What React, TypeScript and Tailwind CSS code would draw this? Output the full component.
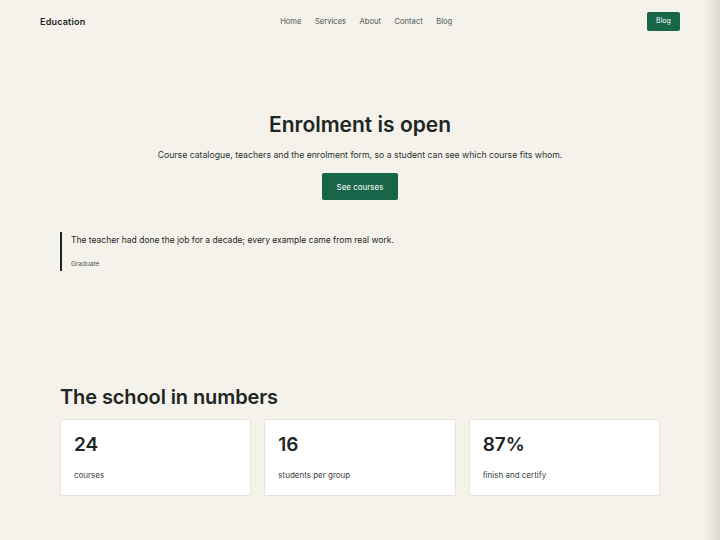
import React from "react";

const stats = [
  { n: "24", l: "courses" },
  { n: "16", l: "students per group" },
  { n: "87%", l: "finish and certify" },
];

export default function App() {
  return (
    <div className="relative min-h-[540px] w-full bg-[#f5f2eb] text-[#1d2622] font-['Inter',sans-serif]">
      <header className="flex h-[42px] items-center justify-between px-[40px] pt-[1px]">
        <div className="text-[9px] font-semibold tracking-[0.2px]">Education</div>
        <nav className="flex gap-[13.5px] text-[7.6px] text-[#4a524e]">
          <span>Home</span>
          <span>Services</span>
          <span>About</span>
          <span>Contact</span>
          <span>Blog</span>
        </nav>
        <span className="flex h-[19px] w-[33px] items-center justify-center rounded-[2px] bg-[#17664a] text-[7px] text-white">Blog</span>
      </header>

      <section className="flex flex-col items-center pt-[71px]">
        <h1 className="text-[21px] font-semibold leading-[24px]">Enrolment is open</h1>
        <p className="mt-[12px] text-[8.7px] text-[#2b332f]">
          Course catalogue, teachers and the enrolment form, so a student can see which course fits whom.
        </p>
        <span className="mt-[11px] flex h-[27px] w-[76px] items-center justify-center rounded-[2px] bg-[#17664a] text-[8px] text-white">See courses</span>
      </section>

      <div className="mx-auto mt-[32px] w-[600px]">
        <blockquote className="border-l-2 border-[#1d2622] pl-[9px] py-[2px]">
          <p className="text-[8.5px] leading-[12px]">The teacher had done the job for a decade; every example came from real work.</p>
          <p className="mt-[14px] text-[6.5px] leading-[9px] text-[#4a524e]">Graduate</p>
        </blockquote>
      </div>

      <section className="mx-auto mt-[114px] w-[600px]">
        <h2 className="text-[20px] font-semibold leading-[24px] tracking-[-0.1px]">The school in numbers</h2>
        <div className="mt-[10px] grid grid-cols-3 gap-[13px]">
          {stats.map((s) => (
            <div key={s.n} className="h-[77px] rounded-[2px] border border-[#e8e4dc] bg-white px-[13px] pt-[13px]">
              <div className="text-[19px] font-semibold leading-[24px]">{s.n}</div>
              <div className="mt-[12px] text-[8px] text-[#3a423e]">{s.l}</div>
            </div>
          ))}
        </div>
      </section>

      <div className="pointer-events-none absolute right-0 top-0 h-full w-[16px] bg-gradient-to-r from-transparent to-[#dcd9d3]" />
    </div>
  );
}
